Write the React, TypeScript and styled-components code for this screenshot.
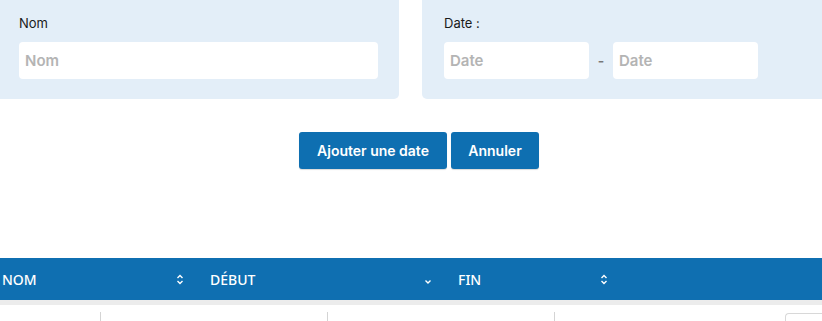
import * as React from 'react';
import styled, { createGlobalStyle } from 'styled-components';

const Global = createGlobalStyle`
  body {
    margin: 0;
    background: #ffffff;
    font-family: 'Inter', 'Noto Sans', sans-serif;
    overflow: hidden;
  }
`;

const Page = styled.div`
  width: 822px;
  height: 321px;
  overflow: hidden;
  display: flex;
  flex-direction: column;
  & > * {
    flex-shrink: 0;
  }
`;

const Filters = styled.div`
  display: flex;
  gap: 23px;
  height: 99px;
`;

const Panel = styled.div<{ $side: 'left' | 'right' }>`
  background: #e3eef8;
  padding: 14px 0 0 ${(p) => (p.$side === 'left' ? '19px' : '22px')};
  box-sizing: border-box;
  border-radius: ${(p) => (p.$side === 'left' ? '0 0 5px 0' : '0 0 0 5px')};
  width: ${(p) => (p.$side === 'left' ? '399px' : 'auto')};
  flex: ${(p) => (p.$side === 'left' ? '0 0 auto' : '1')};
`;

const Label = styled.div`
  font-size: 13px;
  line-height: 18px;
  color: #1a1a1a;
  margin-bottom: 10px;
`;

const Row = styled.div`
  display: flex;
  align-items: center;
`;

const Input = styled.input<{ $w: number }>`
  width: ${(p) => p.$w}px;
  height: 37px;
  box-sizing: border-box;
  border: none;
  border-radius: 4px;
  background: #ffffff;
  padding: 0 6px;
  font-family: 'Inter', sans-serif;
  font-size: 15px;
  font-weight: 600;
  color: #333;
  outline: none;
  &::placeholder {
    color: #b4b4b4;
  }
`;

const Dash = styled.span`
  width: 24px;
  text-align: center;
  color: #777;
  font-size: 14px;
  font-weight: 600;
`;

const Actions = styled.div`
  display: flex;
  justify-content: center;
  gap: 4px;
  margin-top: 33px;
  padding-left: 16px;
`;

const Button = styled.button<{ $w: number }>`
  width: ${(p) => p.$w}px;
  height: 37px;
  border: none;
  border-radius: 3px;
  background: #0e6fb1;
  color: #ffffff;
  font-family: 'Inter', sans-serif;
  font-size: 14px;
  font-weight: 600;
  box-shadow: 0 1px 1px rgba(0, 0, 0, 0.15);
  cursor: pointer;
`;

const Table = styled.div`
  margin-top: 89px;
`;

const Head = styled.div`
  display: flex;
  height: 42px;
  background: #0f6fb1;
  border-bottom: 5px solid #ececec;
  margin-left: -8px;
`;

const Th = styled.div<{ $w: number }>`
  width: ${(p) => p.$w}px;
  box-sizing: border-box;
  padding: 0 16px 0 10px;
  display: flex;
  align-items: center;
  justify-content: space-between;
  color: #ffffff;
  font-family: 'Noto Sans', 'Open Sans', sans-serif;
  font-size: 14px;
  font-weight: 500;
`;

const Body = styled.div`
  display: flex;
  margin-top: 7px;
  height: 20px;
`;

const Td = styled.div<{ $w: number }>`
  width: ${(p) => p.$w}px;
  border-right: 1px solid #d4d4d4;
  flex: 0 0 auto;
`;

const Check = styled.div`
  margin-left: auto;
  margin-top: 1px;
  width: 36px;
  height: 20px;
  border: 1px solid #d8d8d8;
  border-right: none;
  border-radius: 4px 0 0 0;
`;

const SortBoth = () => (
  <svg width="8" height="11" viewBox="0 0 8 11" fill="none" stroke="#fff" strokeWidth="1.4">
    <path d="M1.5 4 L4 1.5 L6.5 4" />
    <path d="M1.5 7 L4 9.5 L6.5 7" />
  </svg>
);

const SortDown = () => (
  <svg width="8" height="11" viewBox="0 0 8 11" fill="none" stroke="#fff" strokeWidth="1.4">
    <path d="M1.5 6.5 L4 9 L6.5 6.5" />
  </svg>
);

export default function App() {
  return (
    <Page>
      <Global />
      <Filters>
        <Panel $side="left">
          <Label>Nom</Label>
          <Input $w={359} placeholder="Nom" />
        </Panel>
        <Panel $side="right">
          <Label>Date :</Label>
          <Row>
            <Input $w={145} placeholder="Date" />
            <Dash>-</Dash>
            <Input $w={145} placeholder="Date" />
          </Row>
        </Panel>
      </Filters>
      <Actions>
        <Button $w={148}>Ajouter une date</Button>
        <Button $w={88}>Annuler</Button>
      </Actions>
      <Table>
        <Head>
          <Th $w={208}>
            NOM
            <SortBoth />
          </Th>
          <Th $w={248}>
            DÉBUT
            <SortDown />
          </Th>
          <Th $w={176}>
            FIN
            <SortBoth />
          </Th>
        </Head>
        <Body>
          <Td $w={100} />
          <Td $w={226} />
          <Td $w={226} />
          <Check />
        </Body>
      </Table>
    </Page>
  );
}
